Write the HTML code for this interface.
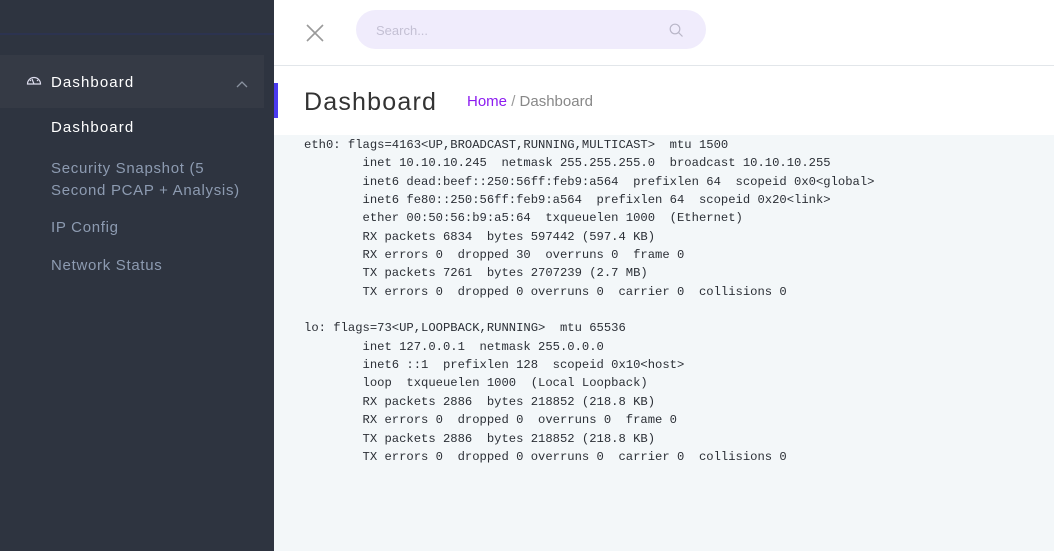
<!DOCTYPE html>
<html><head><meta charset="utf-8"><style>
*{margin:0;padding:0;box-sizing:border-box}
body{width:1054px;height:551px;overflow:hidden;font-family:"Liberation Sans",sans-serif;background:#fff;position:relative}
.sb{position:absolute;left:0;top:0;width:274px;height:551px;background:#2e3440}
.sb .line{position:absolute;left:0;top:33px;width:274px;height:2px;background:#2c3350}
.act{position:absolute;left:0;top:55px;width:264px;height:53px;background:#353a45}
.t{position:absolute;font-size:15px;color:#8d9bb1;white-space:nowrap;letter-spacing:0.7px}
.main{position:absolute;left:274px;top:0;right:0;bottom:0}
.hdr{position:absolute;left:0;top:0;right:0;height:66px;border-bottom:1px solid #e2e6ea;background:#fff}
.search{position:absolute;left:82px;top:10px;width:350px;height:39px;border-radius:20px;background:#f0ecfc}
.content{position:absolute;left:0;top:135px;right:0;bottom:0;background:#f3f7f9}
pre{position:absolute;left:30px;top:1px;font-family:"Liberation Mono",monospace;font-size:12.2px;line-height:18.35px;color:#2b2f36}
</style></head><body>
<div class="sb">
<div class="line"></div>
<div class="act"></div>
<svg style="position:absolute;left:26px;top:75px" width="16" height="12" viewBox="0 0 16 12"><path d="M1.5 9 A6.5 6.5 0 0 1 14.5 9 Z M8 9 L6 4 M4 5 l1 1 M12 5 l-1 1" fill="none" stroke="#dde" stroke-width="1.2"/></svg>
<div class="t" style="left:51px;top:74px;color:#fff;letter-spacing:1.1px">Dashboard</div>
<svg style="position:absolute;left:236px;top:80px" width="12" height="8" viewBox="0 0 12 8"><path d="M1 7 L6 2 L11 7" fill="none" stroke="#8a92a0" stroke-width="1.3"/></svg>
<div class="t" style="left:51px;top:119px;color:#fff;letter-spacing:1.1px">Dashboard</div>
<div class="t" style="left:51px;top:158px;line-height:22px">Security Snapshot (5<br>Second PCAP + Analysis)</div>
<div class="t" style="left:51px;top:219px">IP Config</div>
<div class="t" style="left:51px;top:257px">Network Status</div>
</div>
<div class="main">
<div class="hdr">
<svg style="position:absolute;left:30px;top:22px" width="22" height="22" viewBox="0 0 22 22"><path d="M3 3 L19 19 M19 3 L3 19" stroke="#9a9a9a" stroke-width="1.6"/></svg>
<div class="search"><span style="position:absolute;left:20px;top:13px;font-size:13px;color:#c4c0d4">Search...</span>
<svg style="position:absolute;left:313px;top:13px" width="15" height="15" viewBox="0 0 15 15"><circle cx="6" cy="6" r="4.8" fill="none" stroke="#b9b6c8" stroke-width="1.2"/><path d="M9.5 9.5 L13.5 13.5" stroke="#b9b6c8" stroke-width="1.2"/></svg></div>
</div>
<div style="position:absolute;left:0;top:83px;width:4px;height:35px;background:#4a3af0"></div>
<div style="position:absolute;left:30px;top:88px;font-size:25px;color:#333;letter-spacing:1.2px">Dashboard</div>
<div style="position:absolute;left:193px;top:93px;font-size:15px;color:#8c1bf0">Home <span style="color:#999">/</span> <span style="color:#888">Dashboard</span></div>
<div class="content"><pre>eth0: flags=4163&lt;UP,BROADCAST,RUNNING,MULTICAST&gt;  mtu 1500
        inet 10.10.10.245  netmask 255.255.255.0  broadcast 10.10.10.255
        inet6 dead:beef::250:56ff:feb9:a564  prefixlen 64  scopeid 0x0&lt;global&gt;
        inet6 fe80::250:56ff:feb9:a564  prefixlen 64  scopeid 0x20&lt;link&gt;
        ether 00:50:56:b9:a5:64  txqueuelen 1000  (Ethernet)
        RX packets 6834  bytes 597442 (597.4 KB)
        RX errors 0  dropped 30  overruns 0  frame 0
        TX packets 7261  bytes 2707239 (2.7 MB)
        TX errors 0  dropped 0 overruns 0  carrier 0  collisions 0

lo: flags=73&lt;UP,LOOPBACK,RUNNING&gt;  mtu 65536
        inet 127.0.0.1  netmask 255.0.0.0
        inet6 ::1  prefixlen 128  scopeid 0x10&lt;host&gt;
        loop  txqueuelen 1000  (Local Loopback)
        RX packets 2886  bytes 218852 (218.8 KB)
        RX errors 0  dropped 0  overruns 0  frame 0
        TX packets 2886  bytes 218852 (218.8 KB)
        TX errors 0  dropped 0 overruns 0  carrier 0  collisions 0</pre></div>
</div>
</body></html>
